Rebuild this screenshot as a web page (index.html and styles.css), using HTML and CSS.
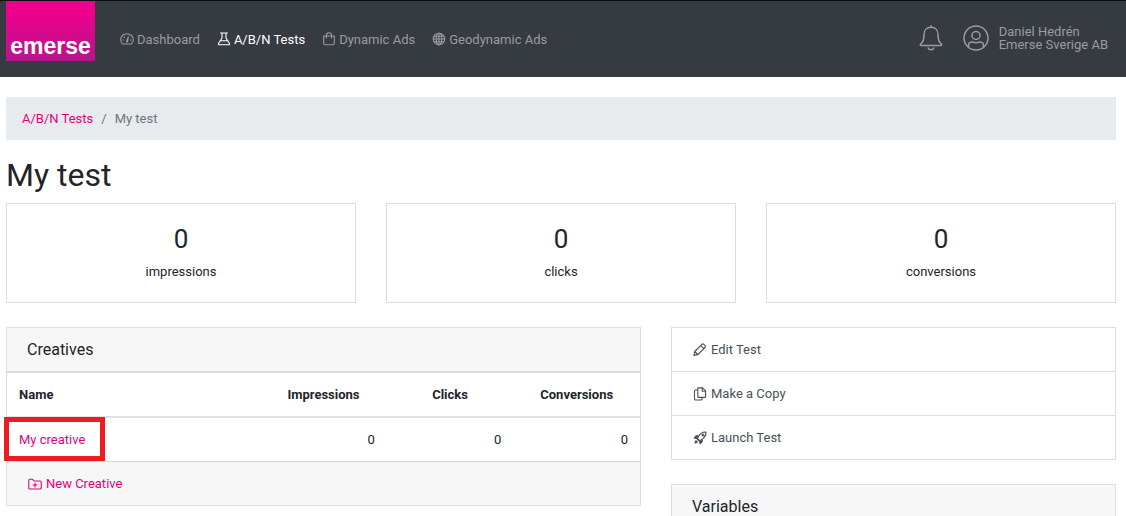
FILE: index.html
```html
<!DOCTYPE html>
<html lang="en">
<head>
<meta charset="utf-8">
<meta name="viewport" content="width=device-width, initial-scale=1">
<title>My test – Emerse</title>
<link rel="stylesheet" href="styles.css">
</head>
<body>
<header class="navbar">
  <a class="brand" href="#">emerse</a>
  <nav class="nav">
    <a class="nav-link" href="#">
      <svg class="icon" viewBox="0 0 14 14"><path d="M2.6 12Q.7 10.500.7 7.800a6.300 6.100 0 0 1 12.600 0Q13.300 10.500 11.400 12Z"/><path d="M6.500 10 8.300 4.600M7.600 10 8.300 4.600"/><path d="M3 8h.6M4.200 5l.3.3M10.500 8h.6"/></svg>
      <span>Dashboard</span></a>
    <a class="nav-link active" href="#">
      <svg class="icon" viewBox="0 0 14 14"><path d="M3.600 1h6.800M5 1v5L1.600 11.300Q1 12.800 2.600 12.800h8.800Q13 12.800 12.400 11.300L9 6V1M3.800 8.800h6.400"/></svg>
      <span>A/B/N Tests</span></a>
    <a class="nav-link" href="#">
      <svg class="icon" viewBox="0 0 14 14"><path d="M1.700 4h10.600v7.300q0 1.400-1.400 1.400H3.100q-1.400 0-1.400-1.400ZM4.400 6V3.400a2.600 2.600 0 0 1 5.200 0V6"/></svg>
      <span>Dynamic Ads</span></a>
    <a class="nav-link" href="#">
      <svg class="icon" viewBox="0 0 14 14"><circle cx="7" cy="7" r="5.700"/><ellipse cx="7" cy="7" rx="2.800" ry="5.700"/><path d="M7 1.300v11.400M1.300 7h11.400M2.200 4.200h9.600M2.200 9.800h9.600"/></svg>
      <span>Geodynamic Ads</span></a>
  </nav>
  <div class="account">
    <button class="icon-button" type="button" aria-label="Notifications">
      <svg class="icon-large" viewBox="0 0 26 26"><path d="M13 .8v1.500M13 2.300c-4.600 0-7 3.200-7 7.200 0 5.600-.9 7.600-3 9.100-1.300 1-.8 2 .4 2h19.200c1.200 0 1.700-1 .4-2-2.100-1.500-3-3.500-3-9.100 0-4-2.400-7.200-7-7.200ZM10.200 23a2.900 2.500 0 0 0 5.600 0"/></svg>
    </button>
    <a class="user" href="#">
      <svg class="icon-large" viewBox="0 0 26 26"><circle cx="13" cy="13" r="12"/><circle cx="13" cy="10.500" r="4"/><path d="M5.500 22v-1.500c0-2.500 2-3.800 4-3.500 2.400 1 4.600 1 7 0 2-.3 4 1 4 3.500V22"/></svg>
      <span class="user-text">Daniel Hedrén<br>Emerse Sverige AB</span>
    </a>
  </div>
</header>

<main class="page">
  <nav class="breadcrumb" aria-label="Breadcrumb">
    <a href="#">A/B/N Tests</a><span>/</span><span>My test</span>
  </nav>
  <h1 class="title">My test</h1>

  <section class="stats">
    <div class="stat"><div class="stat-value">0</div><div>impressions</div></div>
    <div class="stat"><div class="stat-value">0</div><div>clicks</div></div>
    <div class="stat"><div class="stat-value">0</div><div>conversions</div></div>
  </section>

  <div class="columns">
    <section class="card main-column">
      <h2 class="card-header">Creatives</h2>
      <table class="table">
        <thead>
          <tr><th class="name">Name</th><th>Impressions</th><th>Clicks</th><th>Conversions</th></tr>
        </thead>
        <tbody>
          <tr><td class="name highlighted"><a href="#">My creative</a></td><td>0</td><td>0</td><td>0</td></tr>
        </tbody>
      </table>
      <div class="card-footer">
        <a class="action" href="#">
          <svg class="icon" viewBox="0 0 14 14"><path d="M.8 11V3.300q0-1 1-1h2.700L6 4h6.200q1 0 1 1v6q0 1-1 1H1.800q-1 0-1-1ZM7 6v4M5 8h4"/></svg>
          <span>New Creative</span></a>
      </div>
    </section>

    <aside class="side-column">
      <div class="list">
        <a class="list-item" href="#">
          <svg class="icon" viewBox="0 0 14 14"><path d="m.9 12.400.8-3.900L8.900 1.400q.9-.9 1.900 0l1.200 1.200q.9 1 0 1.900L4.900 11.600ZM1.900 8.700l2.900 2.800M7.800 2.600 10.900 5.600"/></svg>
          <span>Edit Test</span></a>
        <a class="list-item" href="#">
          <svg class="icon" viewBox="0 0 14 14"><path d="M4.800.9h4.800l3 3v5.500q0 1-1 1H5.800q-1 0-1-1ZM9.300.9v3.300h3.300M4.600 3H2.500q-1 0-1 1v8q0 1 1 1H8q1 0 1-1v-1.500"/></svg>
          <span>Make a Copy</span></a>
        <a class="list-item" href="#">
          <svg class="icon" viewBox="0 0 14 14"><path d="M13 1Q7.500.8 5 6.200L4.600 8l1.400 1.400 1.800-.4Q13.200 6.500 13 1Z"/><circle cx="10" cy="4" r="1"/><path class="solid" d="M5.300 4 2.500 4.500.4 7.400l3 .6L6 10.600l.6 3L9.500 11.500l.5-2.800L7 9.400 4.600 7ZM3 9 1.700 10.500 1.500 12.500 3.500 12.300 5 11Z"/></svg>
          <span>Launch Test</span></a>
      </div>
      <section class="card">
        <h2 class="card-header">Variables</h2>
      </section>
    </aside>
  </div>
</main>
</body>
</html>
```

FILE: styles.css
```css
*,
*::before {
  box-sizing: border-box;
}

body {
  height: 100vh;
  margin: 0;
  overflow: hidden;
  background: #fff;
  color: #212529;
  font: 13px/19px Roboto, "Liberation Sans", sans-serif;
}

a {
  color: #e6007e;
  text-decoration: none;
}

.icon,
.icon-large {
  flex: none;
  width: 14px;
  height: 14px;
  fill: none;
  stroke: currentColor;
  stroke-width: 1.1;
  stroke-linecap: round;
  stroke-linejoin: round;
}

.icon-large {
  display: block;
  width: 26px;
  height: 26px;
  stroke-width: 1.5;
}

.solid {
  fill: currentColor;
  stroke: none;
}

.navbar {
  display: flex;
  align-items: center;
  height: 77px;
  padding: 0 18px 0 6px;
  border-top: 1px solid #0c0d0f;
  background: #363a41;
}

.brand {
  align-self: flex-start;
  width: 89px;
  height: 60px;
  padding-top: 30px;
  background: linear-gradient(#ee008c 20%, #b5168c);
  color: #fff;
  font: bold 23px/30px "Liberation Sans", sans-serif;
  text-align: center;
}

.nav {
  display: flex;
  gap: 17px;
  margin-left: 25px;
}

.nav-link {
  display: flex;
  align-items: center;
  gap: 3px;
}

.action {
  display: flex;
  align-items: center;
  gap: 4px;
}

.nav-link,
.icon-button,
.user {
  color: #9a9ca0;
}

.nav-link.active {
  color: #fff;
}

.account {
  display: flex;
  align-items: center;
  gap: 19px;
  margin-left: auto;
  padding-bottom: 2px;
}

.icon-button {
  padding: 0;
  border: 0;
  background: none;
}

.user {
  display: flex;
  align-items: center;
  gap: 10px;
}

.user-text {
  line-height: 13px;
}

.page {
  padding: 20px 10px 0 6px;
}

.breadcrumb {
  display: flex;
  gap: 8px;
  padding: 12px 16px;
  background: #e7ebee;
  color: #6c757d;
}

.title {
  margin: 16px 0 8px;
  font-size: 32px;
  font-weight: 400;
  line-height: 39px;
}

.stats {
  display: grid;
  grid-template-columns: repeat(3, 1fr);
  gap: 30px;
}

.stat {
  padding: 20px 20px 21px;
  border: 1px solid #dcddde;
  text-align: center;
}

.stat-value {
  margin-bottom: 8px;
  font-size: 26px;
  line-height: 30px;
}

.columns {
  display: grid;
  grid-template-columns: repeat(12, 1fr);
  align-items: start;
  gap: 30px;
  margin-top: 24px;
}

.main-column {
  grid-column: span 7;
}

.side-column {
  display: grid;
  grid-column: span 5;
  gap: 24px;
}

.card,
.list {
  border: 1px solid #dcddde;
}

.card-header {
  margin: 0;
  padding: 12px 20px;
  border-bottom: 1px solid #d6d8da;
  background: #f7f7f7;
  font-size: 16px;
  font-weight: 400;
  line-height: 19px;
}

.table {
  width: 100%;
  border-spacing: 0;
  table-layout: fixed;
}

.table th,
.table td {
  width: 20%;
  padding: 12px;
}

.table th {
  border-top: 1px solid #dee2e6;
  border-bottom: 2px solid #dee2e6;
}

.table td {
  text-align: right;
}

.table .name {
  width: 40%;
  text-align: left;
}

.highlighted {
  position: relative;
}

/* Marker frame drawn over the cell edges */
.highlighted::before {
  content: "";
  position: absolute;
  top: -1px;
  left: -3px;
  width: 101px;
  height: 44px;
  border: 5px solid #ed1c24;
  pointer-events: none;
}

.card-footer {
  padding: 12px 21px;
  border-top: 1px solid #d6d8da;
  background: #f7f7f7;
}

.list-item {
  display: flex;
  align-items: center;
  gap: 4px;
  padding: 12px 21px;
  color: #495057;
}

.list-item + .list-item {
  border-top: 1px solid #dcddde;
}
```
